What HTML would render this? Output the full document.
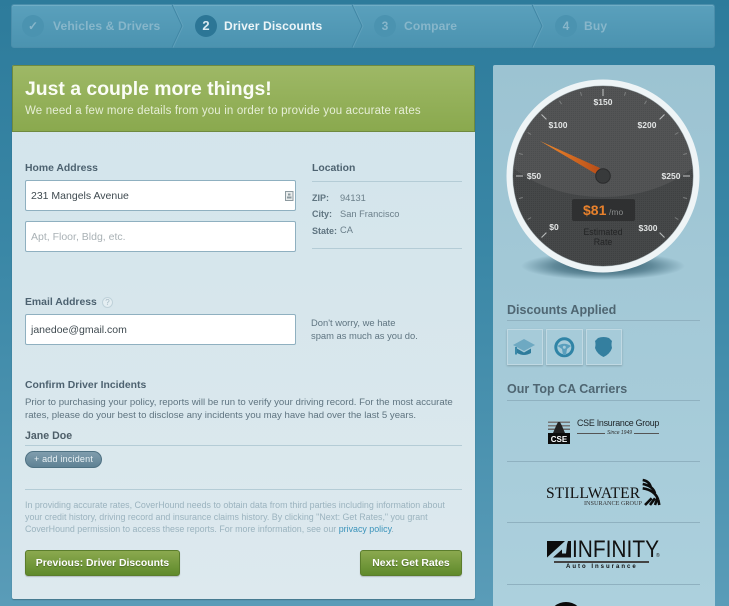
<!DOCTYPE html>
<html><head><meta charset="utf-8">
<style>
html,body{margin:0;padding:0;width:729px;height:606px;overflow:hidden}
#w{position:absolute;left:0;top:0;width:729px;height:606px;overflow:hidden;background:linear-gradient(#2d7b9b 0,#3a87a6 250px,#5a9cb8 606px);font-family:"Liberation Sans",sans-serif;}
.a{position:absolute;white-space:nowrap}
.l{font-size:10.4px;font-weight:bold;color:#4d6270}
.inp{position:absolute;left:25px;width:269px;height:29px;background:#fff;border:1px solid #8fb0c0;border-radius:2px;font-size:10.5px;line-height:31px;text-indent:5px;color:#3f4a50}
.hr{position:absolute;height:1px;background:#b4ccd6}
.st{font-size:12.1px;color:#87b6ca;font-weight:bold;top:19px;letter-spacing:.1px}
.c{position:absolute;top:15px;width:22px;height:22px;border-radius:50%;background:#4b93b0;color:#87b6ca;font-size:12px;font-weight:bold;text-align:center;line-height:22px}
.btn{position:absolute;top:550px;height:24px;background:linear-gradient(#8ba94f,#5f8a2b);border:1px solid #5b7d2c;border-radius:3px;color:#fff;font-size:10.4px;font-weight:bold;text-align:center;line-height:25px;box-shadow:0 1px 1px rgba(0,0,0,.2);text-shadow:0 1px 1px rgba(0,0,0,.3)}
.ic{position:absolute;top:329px;height:36px;background:#a6cbd9;border:1px solid #c0d9e3;box-shadow:0 1px 2px rgba(0,0,0,.2);box-sizing:border-box}
.sep{position:absolute;left:507px;width:193px;height:1px;background:#8fb1c0}
.h3{font-size:12.5px;font-weight:bold;color:#4f6672}
.sm{font-size:8.9px;color:#9bb3bf;line-height:12px}
.x{font-size:9.4px;color:#5f7480;line-height:13px}
</style></head><body><div id="w">

<!-- stepper -->
<div class="a" style="left:11px;top:4px;width:704px;height:44px;background:linear-gradient(#5aa0bc,#4b93b0);border:1px solid #4a8eab;border-radius:3px;box-sizing:border-box;box-shadow:inset 0 1px 0 #70aec6"></div>
<svg class="a" style="left:0;top:0" width="729" height="50" fill="none" stroke-width="1">
<g stroke="#3f86a4"><path d="M172 4.500L182 26 172 47.500"/><path d="M352 4.500L362 26 352 47.500"/><path d="M532 4.500L542 26 532 47.500"/></g>
<g stroke="#6aa9c2" opacity=".6"><path d="M173 4.500L183 26 173 47.500"/><path d="M353 4.500L363 26 353 47.500"/><path d="M533 4.500L543 26 533 47.500"/></g>
</svg>
<div class="c" style="left:22px">✓</div><div class="a st" style="left:53px;">Vehicles &amp; Drivers</div>
<div class="c" style="left:195px;background:#2c7696;color:#d9eaf1;font-size:13px">2</div><div class="a st" style="left:224px;color:#ecf5f8;">Driver Discounts</div>
<div class="c" style="left:374px">3</div><div class="a st" style="left:404px;">Compare</div>
<div class="c" style="left:555px">4</div><div class="a st" style="left:584px;">Buy</div>

<!-- main panel -->
<div class="a" style="left:12px;top:65px;width:463px;height:534px;background:linear-gradient(#d2e4eb,#dde9ee);border-radius:2px;box-shadow:0 1px 1px rgba(0,0,0,.25)"></div>
<div class="a" style="left:12px;top:65px;width:463px;height:67px;background:linear-gradient(#9eb866,#8aa94e);border:1px solid #6f8a3f;box-sizing:border-box;border-radius:2px 2px 0 0"></div>
<div class="a" style="left:25px;top:78px;font-size:19.4px;font-weight:bold;color:#fbfdf6">Just a couple more things!</div>
<div class="a" style="left:25px;top:105px;font-size:11.5px;color:#e6eed6;letter-spacing:.16px">We need a few more details from you in order to provide you accurate rates</div>

<div class="a l" style="left:25px;top:163px">Home Address</div>
<div class="inp" style="top:180px">231 Mangels Avenue</div>
<svg class="a" style="left:285px;top:191px" width="9" height="11"><rect x=".5" y=".5" width="7.500" height="9" fill="#e9ecec" stroke="#8d9aa0"/><rect x="3" y="2.500" width="2.500" height="2" fill="#8d9aa0"/><rect x="2" y="5.500" width="4.500" height="2" fill="#8d9aa0"/></svg>
<div class="inp" style="top:221px;color:#a9b1b5">Apt, Floor, Bldg, etc.</div>

<div class="a l" style="left:312px;top:163px">Location</div>
<div class="hr" style="left:312px;top:181px;width:150px"></div>
<div class="a" style="left:312px;top:193px;font-size:9px;font-weight:bold;color:#5f7480">ZIP:</div>
<div class="a" style="left:340px;top:193px;font-size:9.3px;color:#6b7f8a">94131</div>
<div class="a" style="left:312px;top:209px;font-size:9px;font-weight:bold;color:#5f7480">City:</div>
<div class="a" style="left:340px;top:209px;font-size:9.3px;color:#6b7f8a">San Francisco</div>
<div class="a" style="left:312px;top:226px;font-size:9px;font-weight:bold;color:#5f7480">State:</div>
<div class="a" style="left:340px;top:225px;font-size:9.3px;color:#6b7f8a">CA</div>
<div class="hr" style="left:312px;top:248px;width:150px"></div>

<div class="a l" style="left:25px;top:297px">Email Address</div>
<div class="a" style="left:102px;top:297px;width:11px;height:11px;box-sizing:border-box;border:1px solid #bfd2da;border-radius:50%;background:#e4eef2;color:#a5bac4;font-size:8px;line-height:9px;text-align:center">?</div>
<div class="inp" style="top:314px">janedoe@gmail.com</div>
<div class="a x" style="left:311px;top:316px">Don't worry, we hate<br>spam as much as you do.</div>

<div class="a l" style="left:25px;top:380px">Confirm Driver Incidents</div>
<div class="a x" style="left:25px;top:396px;font-size:9.63px">Prior to purchasing your policy, reports will be run to verify your driving record. For the most accurate<br>rates, please do your best to disclose any incidents you may have had over the last 5 years.</div>
<div class="a l" style="left:25px;top:430px;color:#4d5e68;font-size:10.6px">Jane Doe</div>
<div class="hr" style="left:25px;top:445px;width:437px"></div>
<div class="a" style="left:25px;top:451px;width:77px;height:17px;border-radius:9px;background:linear-gradient(#7f9dad,#5f8294);box-sizing:border-box;border:1px solid #4f7283;color:#eaf2f5;font-size:9px;line-height:15px;text-align:center;letter-spacing:.2px">+ add incident</div>
<div class="hr" style="left:25px;top:489px;width:437px"></div>
<div class="a sm" style="left:25px;top:499px">In providing accurate rates, CoverHound needs to obtain data from third parties including information about<br>your credit history, driving record and insurance claims history. By clicking "Next: Get Rates," you grant<br>CoverHound permission to access these reports. For more information, see our <span style="color:#3b93bb">privacy policy</span>.</div>
<div class="btn" style="left:25px;width:153px">Previous: Driver Discounts</div>
<div class="btn" style="left:360px;width:100px">Next: Get Rates</div>

<!-- side panel -->
<div class="a" style="left:493px;top:65px;width:222px;height:541px;background:linear-gradient(#9cc3d2,#acd0dd);border-radius:2px 2px 0 0"></div>
<svg class="a" style="left:493px;top:65px" width="222" height="225">
<defs>
<radialGradient id="sh"><stop offset="0" stop-color="#1e4a5c" stop-opacity=".9"/><stop offset=".6" stop-color="#1e4a5c" stop-opacity=".5"/><stop offset="1" stop-color="#1e4a5c" stop-opacity="0"/></radialGradient>
<linearGradient id="nd" x1="0" x2="1"><stop offset="0" stop-color="#f08a2c"/><stop offset="1" stop-color="#b84d18"/></linearGradient>
<clipPath id="cp"><circle cx="110" cy="111" r="90"/></clipPath>
<pattern id="pt" width="2" height="2" patternUnits="userSpaceOnUse"><rect width="2" height="2" fill="#464849"/><rect width="1" height="1" fill="#3e4041"/></pattern>
</defs>
<ellipse cx="110" cy="201" rx="82" ry="14" fill="url(#sh)"/>
<circle cx="110" cy="111" r="96.500" fill="#eef4f6"/>
<circle cx="110" cy="111" r="90.500" fill="#9aa5a9"/>
<circle cx="110" cy="111" r="90" fill="url(#pt)"/>
<ellipse cx="110" cy="46" rx="120" ry="86" fill="#fff" opacity=".07" clip-path="url(#cp)"/>
<g stroke="#b9bbbb" stroke-width="1.100">
<path d="M110 31V24"/><path d="M166.600 54.400L171.500 49.500"/><path d="M53.400 54.400L48.500 49.500"/><path d="M190 111H197"/><path d="M30 111H23"/><path d="M166.600 167.600L171.500 172.500"/><path d="M53.400 167.600L48.500 172.500"/>
</g>
<g stroke="#7d7f7f" stroke-width="1">
<path d="M131.500 30.800L132.500 27"/><path d="M88.500 30.800L87.500 27"/><path d="M151.500 39.100L153.500 35.700"/><path d="M68.500 39.100L66.500 35.700"/><path d="M181.900 69.500L185.300 67.500"/><path d="M38.100 69.500L34.700 67.500"/><path d="M190.200 89.500L194 88.500"/><path d="M29.800 89.500L26 88.500"/><path d="M190.200 132.500L194 133.500"/><path d="M29.800 132.500L26 133.500"/><path d="M181.900 152.500L185.300 154.500"/><path d="M38.100 152.500L34.700 154.500"/>
</g>
<g fill="#e2e4e4" font-family="Liberation Sans" font-size="8.500" font-weight="bold" text-anchor="middle">
<text x="110" y="40">$150</text><text x="65" y="63">$100</text><text x="154" y="63">$200</text><text x="41" y="114">$50</text><text x="178" y="114">$250</text><text x="61" y="165">$0</text><text x="155" y="166">$300</text>
</g>
<path d="M47 76L107 103L103 109Z" fill="url(#nd)"/>
<circle cx="110" cy="111" r="7.300" fill="#383a3b" stroke="#2a2b2c"/>
<rect x="79" y="134" width="63" height="22" rx="2" fill="#2f3031"/>
<text x="90" y="150" font-family="Liberation Sans" font-size="14" font-weight="bold" fill="#e8812c">$81</text>
<text x="116" y="150" font-family="Liberation Sans" font-size="8.500" fill="#8a8c8c">/mo</text>
<text x="110" y="170" text-anchor="middle" font-family="Liberation Sans" font-size="8.800" fill="#232425">Estimated</text>
<text x="110" y="180" text-anchor="middle" font-family="Liberation Sans" font-size="8.800" fill="#232425">Rate</text>
</svg>

<div class="a h3" style="left:507px;top:303px">Discounts Applied</div>
<div class="sep" style="top:320px"></div>
<div class="ic" style="left:507px;width:36px"></div>
<div class="ic" style="left:546px;width:37px"></div>
<div class="ic" style="left:586px;width:36px"></div>
<svg class="a" style="left:507px;top:329px" width="120" height="36">
<path d="M17 10L28 16 17 22 6 16Z" fill="#6ea9c2"/><path d="M10 19.500V24Q17 28 24 24V19.500L17 23.500Z" fill="#2f7c9c"/><rect x="8" y="18" width="2" height="7.500" fill="#3a88a8"/>
<circle cx="57.300" cy="18.300" r="8.500" fill="none" stroke="#2f84a6" stroke-width="3"/><path d="M50.500 17Q57 12.500 64 17L60 20 59 26H56L55 20Z" fill="#5a9fbd"/><circle cx="57.300" cy="18.300" r="1.500" fill="#a6cbd9"/>
<path d="M91 9Q96.500 7 102 9L105 12Q104 15 105 19 103 25 96.500 28 90 25 88 19 89 15 88 12Z" fill="#347f9f"/>
</svg>

<div class="a h3" style="left:507px;top:382px">Our Top CA Carriers</div>
<div class="sep" style="top:400px"></div>
<div class="sep" style="top:461px"></div>
<div class="sep" style="top:522px"></div>
<div class="sep" style="top:584px"></div>

<!-- CSE -->
<svg class="a" style="left:548px;top:418px" width="24" height="27">
<rect y="3.500" width="22" height="1.500" fill="#777"/><rect y="7" width="22" height="1.500" fill="#777"/><rect y="10.500" width="22" height="1.500" fill="#666"/>
<path d="M8 8L10 4H12L14 8 17 15H5Z" fill="#222"/><rect y="15" width="22" height="11" fill="#0c0c0c"/>
<text x="11" y="24" text-anchor="middle" font-family="Liberation Sans" font-size="8" font-weight="bold" fill="#fff">CSE</text>
</svg>
<div class="a" style="left:577px;top:418px;font-size:8.9px;color:#1d2326;letter-spacing:-.25px">CSE Insurance Group</div>
<div class="a" style="left:577px;top:433px;width:82px;height:1px;background:#555"></div>
<div class="a" style="left:605px;top:429px;padding:0 2px;background:#a8cdda;font-size:5px;line-height:9px;font-style:italic;color:#333">Since 1949</div>

<!-- Stillwater -->
<div class="a" style="left:546px;top:485px;font-family:'Liberation Serif',serif;font-size:15.5px;color:#111;letter-spacing:.15px">STILLWATER</div>
<div class="a" style="left:584px;top:500px;font-family:'Liberation Serif',serif;font-size:6.200px;color:#333">INSURANCE GROUP</div>
<svg class="a" style="left:642px;top:478px" width="20" height="30" fill="none" stroke="#0c0c0c" stroke-width="2.600">
<path d="M.7 2Q7 3 8.700 8.700"/><path d="M.7 6Q11 8 13 15.300"/><path d="M.7 10.300Q13 12 16.300 22"/><path d="M3 27L9.700 20.300"/><path d="M8 27L13 20.300"/><path d="M13 27L15.300 20.300"/><path d="M17.300 27L16.300 22"/>
</svg>

<!-- Infinity -->
<svg class="a" style="left:547px;top:540px" width="25" height="18"><path d="M0 1H18L0 17.500Z" fill="#0c0c0c"/><path d="M24 1V17.500H6L15 9.500V13.500H19L20 4.500 21 1Z" fill="#111"/></svg>
<div class="a" style="left:572px;top:536px;font-size:24px;line-height:27px;height:27px;color:#111;transform-origin:0 0;transform:scaleX(.87)">INFINITY</div>
<div class="a" style="left:656px;top:553px;font-size:5px;color:#222">®</div>
<div class="a" style="left:554px;top:561px;width:95px;height:1.500px;background:#444"></div>
<div class="a" style="left:566px;top:564px;font-size:6px;font-weight:bold;color:#111;letter-spacing:2px">Auto Insurance</div>

<!-- partial logo: drawn as the visible cap only, ending exactly at the frame edge -->
<svg class="a" style="left:548px;top:602px" width="36" height="4"><path d="M6.700 4A18 18 0 0 1 29.300 4Z" fill="#0a0a0a"/></svg>

</div></body></html>
